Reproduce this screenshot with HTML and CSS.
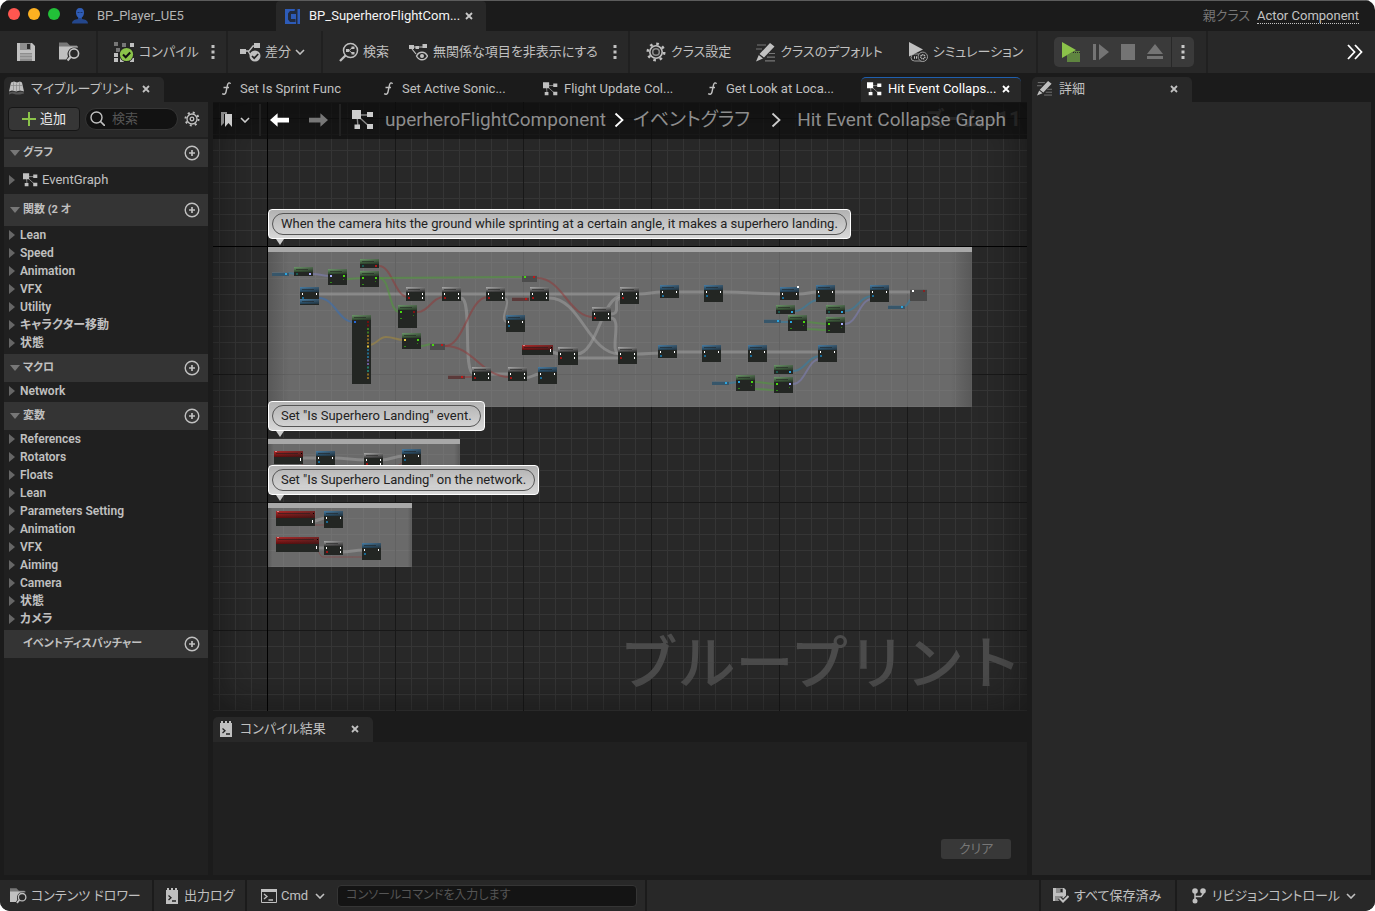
FILE: index.html
```html
<!DOCTYPE html>
<html lang="ja">
<head>
<meta charset="utf-8">
<title>BP_SuperheroFlightComponent</title>
<link rel="stylesheet" href="styles.css">
</head>
<body>
<svg class="sprite" aria-hidden="true">
  <symbol id="i-close" viewBox="0 0 8 8"><path d="M1 1l6 6M7 1L1 7" fill="none" stroke="currentColor" stroke-width="1.8"/></symbol>
  <symbol id="i-chev" viewBox="0 0 10 6"><path d="M1 1l4 4 4-4" fill="none" stroke="currentColor" stroke-width="1.6"/></symbol>
  <symbol id="i-right" viewBox="0 0 10 16"><path d="M1.500 1.500L8.500 8l-7 6.500" fill="none" stroke="currentColor" stroke-width="1.8"/></symbol>
  <symbol id="i-dots" viewBox="0 0 4 16"><path d="M.5 1h3v3h-3zM.5 6.500h3v3h-3zM.5 12h3v3h-3z" fill="currentColor"/></symbol>
  <symbol id="i-save" viewBox="0 0 18 18"><path d="M0 0h15l3 3v15H0z" fill="currentColor"/><path d="M3 0h11v7H3zM3 10h12v8H3z" fill="#8e8e8e"/><path d="M10 1h3v5h-3z" fill="#2a2a2a"/><path d="M3 12h12M3 15h12" stroke="#bbb"/></symbol>
  <symbol id="i-browse" viewBox="0 0 21 19"><path d="M0 0h8l3 3h7v2H0z" fill="#777"/><path d="M0 4h19v13H0z" fill="currentColor"/><path d="M21 5H15a6.500 6.500 0 0 0-6 9L6 19h15z" fill="#282828"/><circle cx="15" cy="11" r="4.600" fill="#282828" stroke="currentColor" stroke-width="1.600"/><path d="M11.800 14.300L8.500 18" stroke="currentColor" stroke-width="2.200"/></symbol>
  <symbol id="i-compile" viewBox="0 0 21 20"><path d="M0 0h4v4H0zM2 6h4v4H2zM8 1h4v4H8z" fill="#777"/><path d="M16 1h4v4h-4zM0 11h4v4H0zM0 16h4v4H0zM6 16h4v4H6zM16 16h4v4h-4zM9 6h3v3H9z" fill="#c0c0c0"/><circle cx="12.500" cy="12.500" r="7.500" fill="#222"/><circle cx="12.500" cy="12.500" r="6.600" fill="#8bc34a"/><path d="M9 12.500l2.700 2.700 4.500-4.700" fill="none" stroke="#111" stroke-width="2"/></symbol>
  <symbol id="i-diff" viewBox="0 0 21 20"><path d="M0 7h6v5H0zM14 1h6v5h-6z" fill="currentColor"/><path d="M6 9h3l4-5h2M8 9l3 5" fill="none" stroke="currentColor" stroke-width="1.300"/><circle cx="15" cy="14" r="5.500" fill="currentColor"/><path d="M12 14l2.200 2.200 4-4.200" fill="none" stroke="#222" stroke-width="1.700"/></symbol>
  <symbol id="i-find" viewBox="0 0 20 19"><circle cx="11.500" cy="8" r="7" fill="none" stroke="currentColor" stroke-width="1.500"/><path d="M6.500 13L1 18.500" stroke="currentColor" stroke-width="2.300"/><path d="M7 6.500h3v3H7zM12.500 4h3v2.500h-3zM12.500 9.500h3V12h-3z" fill="currentColor"/><path d="M10 8l3-2.500M10 8l3 2.500" stroke="currentColor"/></symbol>
  <symbol id="i-hide" viewBox="0 0 19 17"><path d="M0 1h5v4H0zM13.500 0H18v4h-4.500zM6.500 2H10v3H6.500z" fill="currentColor"/><path d="M5 3h9M3 5l4 5" stroke="currentColor" stroke-width="1.200"/><path d="M7.500 12c2.500-5 8.500-5 11 0-2.500 5-8.500 5-11 0z" fill="#282828" stroke="currentColor" stroke-width="1.400"/><circle cx="13" cy="12" r="2" fill="currentColor"/></symbol>
  <symbol id="i-gear" viewBox="0 0 20 20"><circle cx="10" cy="10" r="6.200" fill="none" stroke="currentColor" stroke-width="1.600"/><circle cx="10" cy="10" r="8.200" fill="none" stroke="currentColor" stroke-width="2.600" stroke-dasharray="2.600 3.840"/><circle cx="10" cy="10" r="3.300" fill="none" stroke="#8a8a8a" stroke-width="1.600"/></symbol>
  <symbol id="i-gear-line" viewBox="0 0 16 16"><circle cx="8" cy="8" r="5" fill="none" stroke="currentColor" stroke-width="1.300"/><circle cx="8" cy="8" r="6.500" fill="none" stroke="currentColor" stroke-width="2" stroke-dasharray="2 3.100"/><circle cx="8" cy="8" r="1.800" fill="none" stroke="currentColor" stroke-width="1.300"/></symbol>
  <symbol id="i-edit" viewBox="0 0 19 19"><path d="M1 2h9M0 6h6M13 10.500h6M11 14.200h8M9 17.800h10" stroke="#777" stroke-width="1.200"/><path d="M14 0l4.500 3.500L8 14.500 3.500 11zM2.800 12l4.200 3.400L0 18.500z" fill="currentColor"/></symbol>
  <symbol id="i-sim" viewBox="0 0 20 20"><rect x="3" y="12" width="16" height="7" rx="3.500" fill="none" stroke="#999"/><path d="M1 0l14 7.500L1 14.500z" fill="currentColor"/><circle cx="14.800" cy="14.800" r="4.700" fill="#282828" stroke="#999"/><circle cx="14.800" cy="14.800" r="2" fill="none" stroke="currentColor" stroke-dasharray="1 .6" stroke-width="1.600"/><path d="M6 15.500h4" stroke="currentColor" stroke-width="2.500" stroke-dasharray="1 1"/></symbol>
  <symbol id="i-play" viewBox="0 0 20 20"><path d="M6 13l8-4h5v11H6z" fill="#5f8540"/><path d="M12 10.500h7" stroke="#2a2a2a" stroke-dasharray="1 1"/><path d="M1 0l14 8L1 16z" fill="#8bc34a"/></symbol>
  <symbol id="i-step" viewBox="0 0 16 16"><path d="M0 0h3v16H0zM6 0l10 8-10 8z" fill="currentColor"/></symbol>
  <symbol id="i-eject" viewBox="0 0 16 16"><path d="M8 0l8 10H0zM0 12h16v3H0z" fill="currentColor"/></symbol>
  <symbol id="i-more" viewBox="0 0 16 16"><path d="M1 1l6.500 7L1 15M8 1l6.500 7L8 15" fill="none" stroke="currentColor" stroke-width="1.800"/></symbol>
  <symbol id="i-person" viewBox="0 0 16 16"><path d="M6 8h4v3c3 .5 6 1.500 6 4.500H0C0 12.500 3 11.500 6 11z" fill="#24478c"/><path d="M8 0c3 0 4.200 2 4 5-.2 2.500-1.500 5-4 5S4.200 7.500 4 5C3.800 2 5 0 8 0z" fill="#2f5cb5"/><path d="M5.500 4.500h2M8.500 4.500h2" stroke="#1c3568"/></symbol>
  <symbol id="i-comp" viewBox="0 0 15 15"><path d="M0 0h15v15H0z" fill="#2d5bb8"/><path d="M9.500 2H5L3 4.500v6L5 13h5.500v-3H6V5h5v10h1.500V0H10z" fill="#222b3d"/></symbol>
  <symbol id="i-func" viewBox="0 0 10 13"><path d="M9.500 1.800C8.500.2 7 .8 6.500 3L5 10c-.5 2.200-2 2.800-3.800 1.600M2.500 5.500h5.500" fill="none" stroke="currentColor" stroke-width="1.400"/></symbol>
  <symbol id="i-graph" viewBox="0 0 22 20"><path d="M5 5L6 17M6 5h13M8 8l10 9" stroke="#888" stroke-width="1.400"/><path d="M0 0h9v9H0zM15 2h6v5h-6zM2.500 14.500H8V19H2.500zM15 14h6v5h-6z" fill="currentColor"/></symbol>
  <symbol id="i-book" viewBox="0 0 15 14"><path d="M0 11l4-1 4 1 4-1 3 1v1l-4 1H7l-4-1-3 1z" fill="#555"/><path d="M2 1l3-1 3 1 3-1 2 1 2 9-4-1-4 1-4-1-3 1z" fill="currentColor"/><path d="M4.500 1v8M7.500 2v8M10.500 1v8M2 4h11" stroke="#888" stroke-width=".7"/></symbol>
  <symbol id="i-mark" viewBox="0 0 12 16"><path d="M0 0h6v2H3v9l-3 3z" fill="#888"/><path d="M4 2h7v13l-3.500-4L4 15z" fill="currentColor"/></symbol>
  <symbol id="i-arrow" viewBox="0 0 20 14"><path d="M0 7l8-7v4.500h12v5H8V14z" fill="currentColor"/></symbol>
  <symbol id="i-search" viewBox="0 0 15 15"><circle cx="6.500" cy="6.500" r="5.500" fill="none" stroke="currentColor" stroke-width="1.400"/><path d="M10.500 10.500L15 15" stroke="currentColor" stroke-width="1.700"/></symbol>
  <symbol id="i-plus" viewBox="0 0 14 14"><path d="M7 0v14M0 7h14" stroke="#8bc34a" stroke-width="2"/></symbol>
  <symbol id="i-add" viewBox="0 0 16 16"><circle cx="8" cy="8" r="6.800" fill="none" stroke="currentColor" stroke-width="1.400"/><path d="M8 5v6M5 8h6" stroke="currentColor" stroke-width="1.700"/></symbol>
  <symbol id="i-down" viewBox="0 0 10 6"><path d="M0 0h10L5 6z" fill="currentColor"/></symbol>
  <symbol id="i-side" viewBox="0 0 6 10"><path d="M0 0l6 5-6 5z" fill="currentColor"/></symbol>
  <symbol id="i-log" viewBox="0 0 12 16"><path d="M0 2h1V0h2v2h2V0h2v2h2V0h2v2h1v14H0z" fill="currentColor"/><path d="M2.500 7.500L5 9.700l-2.500 2.300M6 13h4" fill="none" stroke="#222" stroke-width="1.300"/></symbol>
  <symbol id="i-cmd" viewBox="0 0 16 14"><path d="M.5.5h15v13H.5z" fill="none" stroke="currentColor"/><path d="M0 0h16v3H0z" fill="currentColor"/><path d="M3 5l3 2.500L3 10M7.500 11H12" fill="none" stroke="currentColor" stroke-width="1.300"/></symbol>
  <symbol id="i-saved" viewBox="0 0 16 15"><path d="M0 0h11l2 2v6l-3 5H0z" fill="currentColor"/><path d="M3 0h7v5H3zM2 8h8v5H2z" fill="#8e8e8e"/><path d="M7.500 1h2v3h-2z" fill="#222"/><path d="M6.500 10l3.500 3.500L15.500 8" fill="none" stroke="#2a2a2a" stroke-width="4"/><path d="M6.500 10l3.500 3.500L15.500 8" fill="none" stroke="currentColor" stroke-width="2"/></symbol>
  <symbol id="i-branch" viewBox="0 0 14 16"><circle cx="3" cy="3" r="2.800" fill="currentColor"/><circle cx="11" cy="3" r="2.800" fill="currentColor"/><circle cx="3" cy="13" r="2.500" fill="currentColor"/><path d="M3 3v10M11 3v3L9 8.500H3" fill="none" stroke="currentColor" stroke-width="1.500"/></symbol>
</svg>

<div class="window">
  <header class="titlebar">
    <div class="lights"><i class="red"></i><i class="yellow"></i><i class="green"></i></div>
    <div class="asset"><svg class="s16"><use href="#i-person"/></svg><span>BP_Player_UE5</span></div>
    <div class="asset current"><svg class="s15"><use href="#i-comp"/></svg><span>BP_SuperheroFlightCom...</span><button class="x" aria-label="閉じる"><svg><use href="#i-close"/></svg></button></div>
    <div class="parent"><span>親クラス</span><a href="#">Actor Component</a></div>
  </header>

  <nav class="toolbar">
    <div class="group g-file">
      <button aria-label="保存"><svg class="s18"><use href="#i-save"/></svg></button>
      <button aria-label="参照"><svg class="s21"><use href="#i-browse"/></svg></button>
    </div>
    <div class="group g-compile">
      <button><svg class="s21"><use href="#i-compile"/></svg>コンパイル</button>
      <button aria-label="コンパイル設定"><svg class="dots"><use href="#i-dots"/></svg></button>
    </div>
    <div class="group g-diff">
      <button><svg class="s21"><use href="#i-diff"/></svg>差分<svg class="chev"><use href="#i-chev"/></svg></button>
    </div>
    <div class="group g-find">
      <button><svg class="s20"><use href="#i-find"/></svg>検索</button>
      <button><svg class="s19"><use href="#i-hide"/></svg>無関係な項目を非表示にする</button>
      <button aria-label="表示設定"><svg class="dots"><use href="#i-dots"/></svg></button>
    </div>
    <div class="group g-class">
      <button><svg class="s20"><use href="#i-gear"/></svg>クラス設定</button>
      <button><svg class="s19"><use href="#i-edit"/></svg>クラスのデフォルト</button>
      <button><svg class="s20"><use href="#i-sim"/></svg>シミュレーション</button>
    </div>
    <div class="group g-play">
      <div class="playbox">
        <button aria-label="プレイ"><svg class="s20"><use href="#i-play"/></svg></button>
        <button aria-label="ステップ" disabled><svg class="s16"><use href="#i-step"/></svg></button>
        <button aria-label="停止" disabled><i class="stop"></i></button>
        <button aria-label="イジェクト" disabled><svg class="s16"><use href="#i-eject"/></svg></button>
        <button class="opts" aria-label="プレイ設定"><svg class="dots"><use href="#i-dots"/></svg></button>
      </div>
    </div>
    <button class="overflow" aria-label="その他"><svg class="s16"><use href="#i-more"/></svg></button>
  </nav>

  <main class="workspace">
    <aside class="panel blueprint">
      <div class="tabs"><div class="tab active bp-tab"><svg class="s15"><use href="#i-book"/></svg><span>マイブループリント</span><button class="x" aria-label="閉じる"><svg><use href="#i-close"/></svg></button></div></div>
      <div class="addrow">
        <button class="add"><svg><use href="#i-plus"/></svg>追加</button>
        <label class="search"><svg class="s15"><use href="#i-search"/></svg><input type="text" placeholder="検索" aria-label="検索"></label>
        <button class="cog" aria-label="設定"><svg class="s16"><use href="#i-gear-line"/></svg></button>
      </div>
      <div class="tree">
        <div class="head"><svg class="down"><use href="#i-down"/></svg><h2>グラフ</h2><button aria-label="グラフを追加"><svg class="s16"><use href="#i-add"/></svg></button></div>
        <div class="graphrow"><svg class="side"><use href="#i-side"/></svg><svg class="gicon"><use href="#i-graph"/></svg>EventGraph</div>
        <div class="head tall"><svg class="down"><use href="#i-down"/></svg><h2>関数 (2 オ</h2><button aria-label="関数を追加"><svg class="s16"><use href="#i-add"/></svg></button></div>
        <ul>
          <li><svg class="side"><use href="#i-side"/></svg>Lean</li>
          <li><svg class="side"><use href="#i-side"/></svg>Speed</li>
          <li><svg class="side"><use href="#i-side"/></svg>Animation</li>
          <li><svg class="side"><use href="#i-side"/></svg>VFX</li>
          <li><svg class="side"><use href="#i-side"/></svg>Utility</li>
          <li><svg class="side"><use href="#i-side"/></svg>キャラクター移動</li>
          <li><svg class="side"><use href="#i-side"/></svg>状態</li>
        </ul>
        <div class="head"><svg class="down"><use href="#i-down"/></svg><h2>マクロ</h2><button aria-label="マクロを追加"><svg class="s16"><use href="#i-add"/></svg></button></div>
        <ul>
          <li><svg class="side"><use href="#i-side"/></svg>Network</li>
        </ul>
        <div class="head"><svg class="down"><use href="#i-down"/></svg><h2>変数</h2><button aria-label="変数を追加"><svg class="s16"><use href="#i-add"/></svg></button></div>
        <ul>
          <li><svg class="side"><use href="#i-side"/></svg>References</li>
          <li><svg class="side"><use href="#i-side"/></svg>Rotators</li>
          <li><svg class="side"><use href="#i-side"/></svg>Floats</li>
          <li><svg class="side"><use href="#i-side"/></svg>Lean</li>
          <li><svg class="side"><use href="#i-side"/></svg>Parameters Setting</li>
          <li><svg class="side"><use href="#i-side"/></svg>Animation</li>
          <li><svg class="side"><use href="#i-side"/></svg>VFX</li>
          <li><svg class="side"><use href="#i-side"/></svg>Aiming</li>
          <li><svg class="side"><use href="#i-side"/></svg>Camera</li>
          <li><svg class="side"><use href="#i-side"/></svg>状態</li>
          <li><svg class="side"><use href="#i-side"/></svg>カメラ</li>
        </ul>
        <div class="head"><i class="down"></i><h2>イベントディスパッチャー</h2><button aria-label="ディスパッチャーを追加"><svg class="s16"><use href="#i-add"/></svg></button></div>
      </div>
    </aside>

    <section class="center">
      <div class="tabs doc">
        <div class="tab"><svg class="fn"><use href="#i-func"/></svg><span>Set Is Sprint Func</span></div>
        <div class="tab"><svg class="fn"><use href="#i-func"/></svg><span>Set Active Sonic...</span></div>
        <div class="tab"><svg class="gicon"><use href="#i-graph"/></svg><span>Flight Update Col...</span></div>
        <div class="tab"><svg class="fn"><use href="#i-func"/></svg><span>Get Look at Loca...</span></div>
        <div class="tab active lit"><svg class="gicon"><use href="#i-graph"/></svg><span>Hit Event Collaps...</span><button class="x" aria-label="閉じる"><svg><use href="#i-close"/></svg></button></div>
      </div>
      <div class="graph">
        <svg class="nodes" id="nodes" aria-hidden="true">
          <defs>
            <linearGradient id="h-blue" x2="0" y2="1"><stop offset="0" stop-color="#4a7fa6"/><stop offset="1" stop-color="#203f54"/></linearGradient>
            <linearGradient id="h-green" x2="0" y2="1"><stop offset="0" stop-color="#6f9a6c"/><stop offset="1" stop-color="#2c472b"/></linearGradient>
            <linearGradient id="h-gray" x2="0" y2="1"><stop offset="0" stop-color="#b0b0b0"/><stop offset="1" stop-color="#3c3c3c"/></linearGradient>
            <linearGradient id="h-red" x2="0" y2="1"><stop offset="0" stop-color="#b02a2a"/><stop offset="1" stop-color="#5e0c0c"/></linearGradient>
            <linearGradient id="fade"><stop offset="0" stop-color="#222" stop-opacity="0"/><stop offset="1" stop-color="#222" stop-opacity=".7"/></linearGradient>
            <linearGradient id="edge"><stop offset="0" stop-color="#222" stop-opacity=".25"/><stop offset=".03" stop-color="#222" stop-opacity="0"/><stop offset=".97" stop-color="#222" stop-opacity="0"/><stop offset="1" stop-color="#222" stop-opacity=".25"/></linearGradient>
          </defs>
        </svg>
        <p class="bubble b1"><span>When the camera hits the ground while sprinting at a certain angle, it makes a superhero landing.</span></p>
        <p class="bubble b2"><span>Set "Is Superhero Landing" event.</span></p>
        <p class="bubble b3"><span>Set "Is Superhero Landing" on the network.</span></p>
        <div class="watermark">ブループリント</div>
        <div class="zoomlevel">ズーム -11</div>
        <div class="crumbs">
          <button class="mark" aria-label="ブックマーク"><svg class="bm"><use href="#i-mark"/></svg><svg class="chev"><use href="#i-chev"/></svg></button>
          <div class="hist">
            <button class="back" aria-label="戻る"><svg class="arrow"><use href="#i-arrow"/></svg></button>
            <button class="fwd" aria-label="進む"><svg class="arrow flip"><use href="#i-arrow"/></svg></button>
          </div>
          <svg class="root"><use href="#i-graph"/></svg>
          <a class="c1" href="#">uperheroFlightComponent</a>
          <svg class="sep white"><use href="#i-right"/></svg>
          <a class="c2" href="#">イベントグラフ</a>
          <svg class="sep"><use href="#i-right"/></svg>
          <a class="c3" href="#">Hit Event Collapse Graph</a>
        </div>
      </div>
      <section class="results">
        <div class="tabs"><div class="tab active res-tab"><svg class="log"><use href="#i-log"/></svg><span>コンパイル結果</span><button class="x" aria-label="閉じる"><svg><use href="#i-close"/></svg></button></div></div>
        <div class="output"><button class="clear" disabled>クリア</button></div>
      </section>
    </section>

    <aside class="panel details">
      <div class="tabs"><div class="tab active det-tab"><svg class="s15"><use href="#i-edit"/></svg><span>詳細</span><button class="x" aria-label="閉じる"><svg><use href="#i-close"/></svg></button></div></div>
      <div class="detailbody"></div>
    </aside>
  </main>

  <footer class="status">
    <button class="st drawer"><svg class="browse"><use href="#i-browse"/></svg>コンテンツ ドロワー</button>
    <button class="st output-log"><svg class="log"><use href="#i-log"/></svg>出力ログ</button>
    <div class="st console">
      <button class="cmd"><svg class="cmdi"><use href="#i-cmd"/></svg>Cmd<svg class="chev"><use href="#i-chev"/></svg></button>
      <input type="text" placeholder="コンソールコマンドを入力します" aria-label="コンソールコマンド">
    </div>
    <div class="st grow"></div>
    <button class="st saved"><svg class="savedi"><use href="#i-saved"/></svg>すべて保存済み</button>
    <button class="st revision"><svg class="branch"><use href="#i-branch"/></svg>リビジョンコントロール<svg class="chev"><use href="#i-chev"/></svg></button>
  </footer>
</div>
<script src="graph.js"></script>
</body>
</html>
```
FILE: styles.css
```css
* { box-sizing: border-box; }
body {
  margin: 0;
  background: #fff;
  color: #c0c0c0;
  font: 13px/18px Roboto, "Noto Sans CJK JP", sans-serif;
  font-feature-settings: "palt";
}
button, input {
  font: inherit;
  font-feature-settings: inherit;
  color: inherit;
  background: none;
  border: 0;
  padding: 0;
  margin: 0;
}
button { display: flex; align-items: center; white-space: nowrap; }
a { color: inherit; text-decoration: none; }
h2, p, ul { margin: 0; padding: 0; }
svg { flex: none; display: block; }
.sprite { position: absolute; width: 0; height: 0; }
.s15 { width: 15px; height: 15px; }
.s16 { width: 16px; height: 16px; }
.s18 { width: 18px; height: 18px; }
.s19 { width: 19px; height: 19px; }
.s20 { width: 20px; height: 20px; }
.s21 { width: 21px; height: 20px; }
.dots { width: 4px; height: 16px; }
.chev { width: 10px; height: 6px; }
.x svg { width: 8px; height: 8px; }

.window {
  display: flex;
  flex-direction: column;
  height: 100vh;
  overflow: hidden;
  background: #1b1b1b;
  border-radius: 10px;
}

/* title bar */
.titlebar { display: flex; height: 31px; flex: none; border-top: 1px solid #5c5c5c; }
.lights { display: flex; gap: 8px; padding: 7px 12px 0 8px; }
.lights i { width: 12px; height: 12px; border-radius: 50%; }
.lights .red { background: #ff5650; }
.lights .yellow { background: #fdb021; }
.lights .green { background: #22c038; }
.asset { display: flex; align-items: center; width: 204px; gap: 9px; }
.asset:nth-child(2) { color: #b4b4b4; }
.asset.current { width: 210px; padding-left: 9px; background: #282828; color: #f4f4f4; border-radius: 4px 4px 0 0; }
.asset .x { color: #c8c8c8; margin-left: -4px; }
.parent { display: flex; align-items: center; margin-left: auto; gap: 7px; padding-right: 16px; color: #777; }
.parent a { color: #c4c4c4; line-height: 15px; border-bottom: 1px dotted #c4c4c4; }

/* toolbar */
.toolbar { display: flex; height: 42px; flex: none; background: #282828; }
.group { display: flex; align-items: center; border-right: 2px solid #202020; }
.group button { gap: 4px; }
.g-file { width: 98px; padding-left: 17px; gap: 24px; }
.g-compile { width: 130px; padding-left: 16px; gap: 12px; }
.g-diff { width: 95px; padding-left: 12px; }
.g-find { width: 307px; padding-left: 16px; gap: 20px; }
.g-find button:nth-child(2) { gap: 5px; }
.g-find button:last-child { margin-left: -5px; }
.g-class { padding: 0 13px 0 16px; gap: 25px; }
.g-class button { gap: 5px; }
.g-play { padding: 0 12px 0 16px; }
.playbox { display: flex; height: 30px; background: #3a3a3a; border-radius: 5px; padding-left: 7px; gap: 12px; color: #c8c8c8; }
.playbox button:disabled { color: #747474; }
.playbox .opts { width: 23px; justify-content: center; border-left: 1px solid #282828; margin-left: -4px; }
.stop { width: 14px; height: 16px; background: #747474; }
.overflow { margin-left: auto; padding-right: 12px; color: #fff; }

/* workspace */
.workspace { display: flex; flex: 1; min-height: 0; gap: 5px; padding: 4px 4px 5px; }
.panel { display: flex; flex-direction: column; flex: none; }
.blueprint { width: 204px; background: #202020; }
.details { width: 339px; }
.detailbody { flex: 1; background: #282828; }
.center { display: flex; flex-direction: column; flex: 1; min-width: 0; }
.tabs { display: flex; flex: none; height: 25px; background: #1b1b1b; }
.tab { display: flex; align-items: center; width: 162px; padding: 0 0 2px 8px; gap: 9px; white-space: nowrap; }
.tab.active { width: 160px; background: #282828; border-radius: 5px 5px 0 0; }
.tab .x { margin-left: auto; margin-right: 14px; }
.bp-tab { padding-left: 5px; gap: 7px; }
.tab.bp-tab span { margin-right: -8px; }
.det-tab { padding-left: 5px; gap: 7px; }
.tab.res-tab { padding-left: 7px; gap: 8px; }
.tab.lit { padding-left: 6px; gap: 6px; color: #fff; border-top: 1px solid #1f5fae; }
.tab.lit .x { margin-right: 13px; margin-left: 0; }
.tab:nth-child(3) { padding-left: 6px; gap: 6px; }
.fn { width: 10px; height: 13px; }
.gicon { width: 15px; height: 14px; }
.log { width: 12px; height: 16px; }

/* my blueprint */
.addrow { display: flex; align-items: center; height: 35px; flex: none; padding: 0 8px 2px 4px; gap: 5px; background: #282828; margin-bottom: 2px; }
.add { width: 72px; height: 24px; justify-content: center; gap: 4px; background: #363636; border: 1px solid #161616; border-radius: 4px; color: #eee; }
.add svg { width: 14px; height: 14px; }
.search { display: flex; align-items: center; flex: 1; min-width: 0; height: 22px; padding-left: 4px; gap: 7px; background: #121212; border: 1px solid #353535; border-radius: 11px; }
.search input { flex: 1; min-width: 0; }
.cog { margin-left: 1px; }
input::placeholder { color: #555; opacity: 1; }
.head { display: flex; align-items: center; height: 28px; padding: 0 8px 0 6px; gap: 3px; background: #343434; }
.head.tall { height: 32px; }
.head h2 { flex: 1; font-size: 11px; line-height: 16px; font-weight: 700; padding-bottom: 1px; }
.down { width: 10px; height: 6px; color: #777; }
.side { width: 6px; height: 10px; color: #666; }
.graphrow { display: flex; align-items: center; height: 27px; padding: 0 0 2px 5px; gap: 4px; }
.graphrow .side { margin-right: 4px; }
.tree ul { list-style: none; padding-bottom: 2px; }
.tree li { display: flex; align-items: center; height: 18px; padding-left: 5px; gap: 5px; font-size: 12px; font-weight: 600; }

/* graph canvas: 16px cells, a darker line every 128px, black axes */
.graph {
  position: relative;
  flex: 1;
  min-height: 0;
  overflow: hidden;
  background:
    linear-gradient(#000, #000) 54px 0 / 1px 100% no-repeat,
    linear-gradient(#000, #000) 0 144px / 100% 1px no-repeat,
    linear-gradient(90deg, #181818 1px, transparent 1px) 54px 0 / 128px 128px,
    linear-gradient(#181818 1px, transparent 1px) 0 16px / 128px 128px,
    linear-gradient(90deg, #353535 1px, transparent 1px) 6px 0 / 16px 16px,
    linear-gradient(#353535 1px, transparent 1px) 0 0 / 16px 16px,
    #282828;
}
.graph::after { content: ""; position: absolute; inset: 0; box-shadow: inset 0 0 40px rgba(10, 10, 10, .55); pointer-events: none; }
.nodes { position: absolute; inset: 0; width: 100%; height: 100%; }
.bubble {
  position: absolute;
  left: 55px;
  height: 30px;
  padding: 3px;
  color: #222;
  background: linear-gradient(rgba(185, 185, 185, .95), rgba(222, 222, 222, .97));
  border: 1px solid #fff;
  border-radius: 4px;
  white-space: nowrap;
}
.bubble span { display: block; height: 22px; padding: 0 8px; line-height: 20px; border: 1px solid #555; border-radius: 11px; }
.bubble::after { content: ""; position: absolute; left: 7px; top: 29px; border: 4px solid transparent; border-top: 6px solid #ccc; border-bottom: 0; }
.b1 { top: 107px; }
.b2 { top: 299px; }
.b3 { top: 363px; }
.watermark { position: absolute; right: 5px; bottom: 12px; font: 500 58px/80px "Noto Sans CJK JP", sans-serif; color: #4b4b4b; }
.zoomlevel { position: absolute; right: 6px; top: 4px; font-size: 21px; line-height: 26px; font-weight: 700; color: #686868; }
.crumbs { position: absolute; inset: 0 0 auto 0; z-index: 1; display: flex; align-items: center; height: 37px; padding-bottom: 1px; background: rgba(10, 10, 10, .65); color: #8d8d8d; font-size: 19px; line-height: 26px; white-space: nowrap; }
.mark { width: 48px; height: 32px; padding-left: 8px; gap: 7px; color: #ccc; border-right: 2px solid #222; }
.bm { width: 12px; height: 16px; }
.hist { display: flex; width: 80px; height: 32px; padding-left: 9px; gap: 20px; border-right: 2px solid #222; }
.arrow { width: 19px; height: 14px; }
.back { color: #fff; }
.fwd { color: #777; }
.flip { transform: scaleX(-1); }
.root { width: 22px; height: 20px; margin: 0 11px; color: #ccc; }
.sep { width: 10px; height: 16px; margin: 0 16px 0 21px; color: #ccc; }
.sep.white { margin: 0 9px 0 8px; color: #fff; }

/* compiler results */
.results { display: flex; flex-direction: column; height: 158px; margin-top: 6px; flex: none; }
.output { flex: 1; display: flex; align-items: flex-end; justify-content: flex-end; padding: 16px; background: #202020; }
.clear { width: 70px; height: 20px; justify-content: center; background: #383838; border-radius: 3px; color: #777; }

/* status bar */
.status { display: flex; height: 31px; flex: none; gap: 2px; }
.st { display: flex; align-items: center; background: #282828; }
.drawer { width: 152px; padding-left: 10px; gap: 4px; }
.browse { width: 17px; height: 16px; }
.output-log { width: 91px; padding-left: 12px; gap: 6px; }
.console { width: 398px; padding-left: 14px; gap: 12px; }
.cmd { gap: 4px; }
.cmd .chev { margin-left: 3px; }
.cmdi { width: 16px; height: 14px; }
.console input { width: 300px; height: 22px; padding: 0 8px 2px; font-size: 12px; background: #141414; border: 1px solid #353535; border-radius: 4px; }
.grow { flex: 1; }
.saved { width: 134px; padding-left: 12px; gap: 5px; }
.savedi { width: 16px; height: 15px; }
.revision { width: 198px; padding-left: 15px; gap: 6px; }
.branch { width: 14px; height: 16px; }
```
FILE: graph.js
```js
// Graph content in canvas pixels, measured from the crossing of the axes.
const comments = [[1, 1, 704, 160], [1, 193, 192, 48], [1, 257, 144, 64]];

// kind, x, y, width, height
const nodes = [
  ["green", 27, 21, 19, 9], ["green", 61, 23, 19, 16], ["green", 93, 13, 19, 9],
  ["green", 93, 25, 19, 16], ["blue", 33, 41, 19, 13], ["blue", 33, 53, 19, 6],
  ["gray", 139, 41, 19, 14], ["gray", 175, 41, 19, 14], ["gray", 219, 41, 19, 14],
  ["green", 131, 59, 19, 23], ["green", 85, 69, 19, 69], ["green", 135, 87, 19, 16],
  ["gray", 205, 121, 19, 14], ["gray", 263, 41, 19, 14], ["blue", 239, 69, 19, 17],
  ["red", 255, 99, 31, 10], ["gray", 291, 101, 20, 18], ["gray", 241, 121, 19, 14],
  ["blue", 271, 121, 19, 17], ["gray", 325, 61, 19, 14], ["gray", 353, 41, 19, 17],
  ["gray", 351, 101, 19, 17], ["blue", 393, 39, 19, 13], ["blue", 437, 39, 19, 17],
  ["blue", 391, 99, 19, 13], ["blue", 435, 99, 19, 17], ["green", 469, 129, 19, 16],
  ["blue", 513, 41, 19, 13], ["blue", 549, 39, 19, 17], ["blue", 603, 39, 19, 17],
  ["green", 509, 59, 19, 9], ["green", 559, 59, 19, 9], ["green", 521, 69, 19, 16],
  ["green", 559, 71, 19, 16], ["blue", 481, 99, 19, 17], ["blue", 551, 99, 19, 17],
  ["green", 507, 119, 19, 9], ["green", 507, 131, 19, 16],
  ["red", 7, 205, 29, 13], ["blue", 49, 205, 19, 17], ["gray", 97, 207, 19, 14],
  ["blue", 135, 203, 19, 17], ["red", 9, 265, 39, 15], ["blue", 57, 265, 19, 17],
  ["red", 9, 291, 43, 15], ["gray", 57, 295, 19, 14], ["blue", 95, 297, 19, 17]
];

// small variable and operator nodes: fill, pin, x, y, width, height
const pills = [
  ["#37566a", "#2aa5e0", 5, 26, 17, 4], ["#4c4c4c", "#c01818", 163, 97, 15, 7],
  ["#5b3a3a", "#c01818", 181, 129, 17, 4], ["#4c4c4c", "#c01818", 255, 29, 15, 7],
  ["#5b3a3a", "#c01818", 245, 51, 17, 4], ["#37566a", "#2aa5e0", 445, 135, 17, 4],
  ["#37566a", "#2aa5e0", 621, 59, 17, 4], ["#37566a", "#2aa5e0", 497, 73, 17, 4],
  ["#494949", "#8a2020", 643, 43, 17, 12]
];

// colour, width, x1, y1, x2, y2
const exec = "#a4a4a4", bool = "#8f3a3a", num = "#4f9a38", obj = "#3570b8", vec = "#8080b8", str = "#2f80a8";
const wires = [
  [exec, 3, 52, 48, 141, 48], [exec, 3, 158, 48, 177, 48], [exec, 3, 194, 48, 221, 48],
  [exec, 3, 238, 48, 265, 48], [exec, 3, 282, 48, 355, 48], [exec, 3, 372, 48, 395, 46],
  [exec, 3, 412, 46, 439, 46], [exec, 3, 456, 46, 515, 48], [exec, 3, 532, 48, 551, 46],
  [exec, 3, 568, 46, 605, 46], [exec, 3, 622, 46, 645, 46],
  [exec, 3, 194, 52, 207, 128], [exec, 2, 236, 52, 241, 76], [exec, 3, 282, 52, 353, 108],
  [exec, 3, 310, 108, 355, 50], [exec, 3, 344, 68, 355, 52], [exec, 3, 344, 72, 353, 108],
  [exec, 3, 310, 112, 353, 112], [exec, 3, 370, 108, 393, 107], [exec, 3, 410, 106, 437, 106],
  [exec, 3, 454, 106, 483, 106], [exec, 3, 500, 106, 553, 106], [exec, 3, 222, 128, 243, 128],
  [exec, 3, 258, 132, 273, 128], [exec, 3, 284, 106, 293, 108],
  [exec, 3, 36, 212, 51, 212], [exec, 3, 66, 212, 99, 214], [exec, 3, 114, 214, 137, 210],
  [exec, 3, 46, 275, 59, 272], [exec, 3, 50, 302, 59, 302], [exec, 3, 74, 306, 97, 304],
  [bool, 2, 112, 20, 141, 51], [bool, 2, 150, 66, 177, 51], [bool, 2, 178, 100, 221, 51],
  [bool, 2, 178, 100, 243, 131], [bool, 2, 198, 131, 207, 131], [bool, 2, 270, 32, 327, 71],
  [num, 2, 80, 33, 95, 32], [num, 2, 112, 32, 257, 31], [num, 2, 112, 32, 133, 66],
  [num, 2, 154, 100, 165, 98], [obj, 2, 52, 52, 87, 76], [vec, 2, 46, 28, 63, 30],
  [str, 2, 22, 27, 29, 28], ["#a58a3a", 2, 102, 99, 119, 91], ["#a58a3a", 2, 119, 91, 137, 94],
  [str, 2, 528, 65, 551, 54], [str, 2, 578, 65, 605, 50], [vec, 2, 578, 78, 605, 53],
  [str, 2, 514, 76, 523, 76], [num, 2, 538, 76, 561, 78], [num, 2, 538, 83, 561, 84],
  [str, 2, 638, 60, 645, 53], [str, 2, 526, 125, 553, 110], [vec, 2, 526, 138, 553, 113],
  [str, 2, 462, 137, 471, 136], [num, 2, 488, 136, 509, 138], [num, 2, 488, 143, 509, 144],
  [bool, 1, 33, 217, 41, 225], [bool, 1, 41, 225, 122, 225], [bool, 1, 41, 225, 51, 219],
  [bool, 1, 122, 225, 137, 217], [bool, 1, 46, 279, 59, 279], [bool, 1, 49, 304, 56, 311],
  [bool, 1, 56, 311, 97, 311]
];

const ns = "http://www.w3.org/2000/svg";
const root = document.createElementNS(ns, "g");
root.setAttribute("transform", "translate(54 144)");

function rect(x, y, width, height, fill, opacity = 1) {
  const el = document.createElementNS(ns, "rect");
  Object.entries({ x, y, width, height, fill, opacity }).forEach(([k, v]) => el.setAttribute(k, v));
  root.append(el);
}

for (const [x, y, w, h] of comments) {
  rect(x, y, w, h, "#a0a0a0", 0.55);
  rect(x, y, w, h, "url(#edge)");
  rect(x, y, w, 5, "#a8a8a8");
}

for (const [color, width, x1, y1, x2, y2] of wires) {
  const bend = Math.max(Math.abs(x2 - x1) * 0.45, Math.abs(y2 - y1) > 12 ? 12 : 0);
  const path = document.createElementNS(ns, "path");
  path.setAttribute("d", `M${x1} ${y1}C${x1 + bend} ${y1} ${x2 - bend} ${y2} ${x2} ${y2}`);
  path.setAttribute("fill", "none");
  path.setAttribute("stroke", color);
  path.setAttribute("stroke-width", width);
  path.setAttribute("opacity", color === exec ? 0.5 : 0.55);
  root.append(path);
}

for (const [kind, x, y, w, h] of nodes) {
  const head = kind === "red" ? Math.round(h * 0.45) : 5;
  rect(x, y, w, h, "#232623");
  rect(x, y, w, head, `url(#h-${kind})`);
  rect(x + 2, y + 2, w - 7, 1, "#1b1b1b", 0.55);
  rect(x, y, w, head, "url(#fade)", 0.6);
  if (h < 8) continue;
  if (kind === "green") {
    if (h > 60) {
      const pins = ["#701010", "#701010", "#3c7a22", "#3c7a22", "#8a6a22", "#8a6a22", "#8a6a22", "#e0c040", "#236a8a", "#236a8a", "#236a8a", "#6a5a9a", "#6a5a9a", "#237a6a", "#237a6a", "#8a6a22", "#8a6a22"];
      pins.forEach((c, i) => rect(x + 15, y + 6 + i * 3.5, 2, 2, c));
      rect(x + 2, y + 6, 2, 2, "#2468d8");
    } else if (h < 12) {
      rect(x + 15, y + 6, 2, 2, x > 500 ? "#2aa5e0" : y < 15 ? "#b01818" : "#aab0ff");
      rect(x + 2, y + 6, 2, 2, "#1a5a52");
    } else {
      rect(x + 2, y + 6, 2, 2, x === 61 ? "#aab0ff" : x === 135 ? "#f0c840" : x === 469 || x === 521 ? "#2aa5e0" : "#48d810");
      rect(x + 15, y + 6, 2, 2, x === 131 ? "#801010" : x === 507 || x === 559 ? "#aab0ff" : "#48d810");
      rect(x + 15, y + 10, 1, 1, "#2f7a18");
      rect(x + 2, y + 13, 2, 1, "#2f8a18");
    }
  } else if (kind === "red") {
    rect(x + w - 3, y + h - 6, 1, 3, "#fff");
    rect(x + 1, y, 2, 1, "#e08080");
    rect(x + w - 2, y + 2, 1, 1, "#000");
  } else {
    rect(x + 2, y + 6, 1, 2, "#fff");
    rect(x + 16, y + 6, 1, 2, "#fff");
    rect(x + 2, y + 10, 2, 2, kind === "blue" ? "#1a6a94" : "#a01414");
    if (kind === "gray") rect(x + 16, y + 10, 1, 2, "#fff");
  }
}

for (const [fill, pin, x, y, w, h] of pills) {
  rect(x, y, w, h, fill);
  rect(x, y, w, 1, "#777", 0.6);
  rect(x + w - 4, y + 1, 2, 2, pin);
  if (h > 6) rect(x + 2, y + 1, 2, 2, h > 8 ? "#fff" : "#48d810");
}
rect(530, 40, 2, 2, "#fff");

document.getElementById("nodes").append(root);
```
